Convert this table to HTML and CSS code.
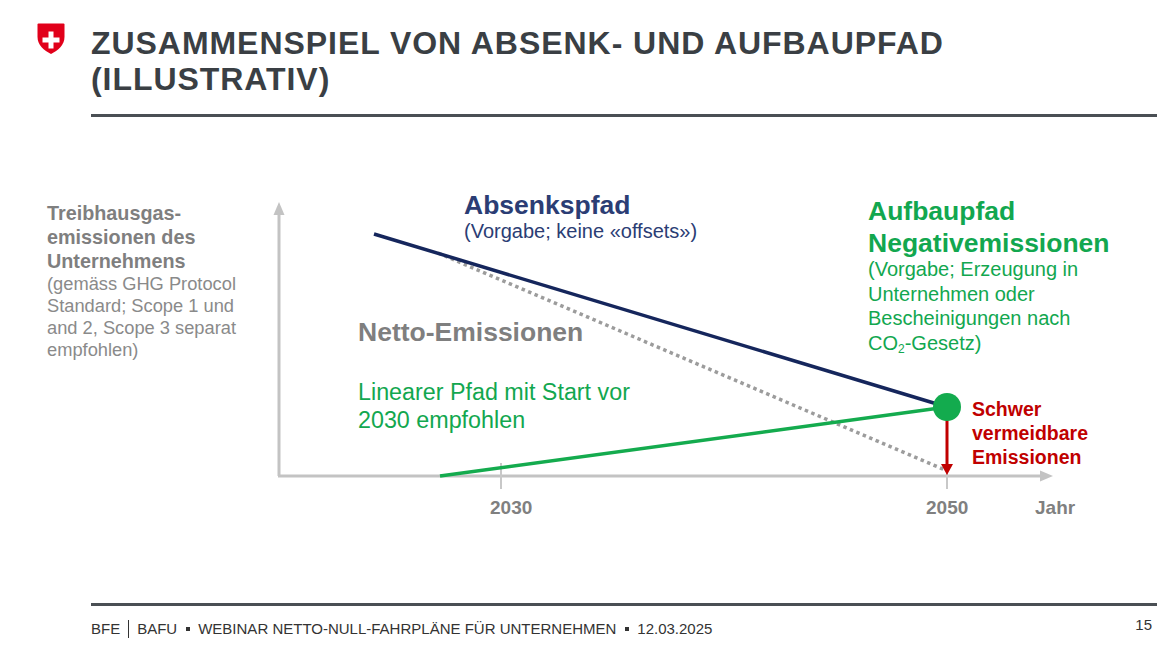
FILE: index.html
```html
<!DOCTYPE html>
<html lang="de">
<head>
<meta charset="utf-8">
<title>Zusammenspiel von Absenk- und Aufbaupfad</title>
<link rel="stylesheet" href="styles.css">
</head>
<body>
<div class="slide">
  <header class="header">
    <svg class="logo" viewBox="0 0 28 31" width="28" height="31" aria-label="Schweizerische Eidgenossenschaft">
      <path d="M1.5 0.5 H26.5 Q27.5 0.5 27.5 1.5 V14 C27.5 22 21 27.5 14 31 C7 27.5 0.5 22 0.5 14 V1.5 Q0.5 0.5 1.5 0.5 Z" fill="#e1001a"/>
      <rect x="11.5" y="8.5" width="5" height="17" fill="#fff"/>
      <rect x="5.5" y="14.5" width="17" height="5" fill="#fff"/>
    </svg>
    <h1 class="title">ZUSAMMENSPIEL VON ABSENK- UND AUFBAUPFAD<br>(ILLUSTRATIV)</h1>
  </header>
  <div class="rule rule-top"></div>

  <main class="chart">
    <svg class="chart-canvas" viewBox="0 117 1170 486" width="1170" height="486">
      <!-- axes -->
      <line x1="279" y1="476" x2="279" y2="214" stroke="#c3c3c3" stroke-width="3"/>
      <polygon points="279,202 273.5,215 284.5,215" fill="#c3c3c3"/>
      <line x1="278" y1="476" x2="1040" y2="476" stroke="#c3c3c3" stroke-width="3"/>
      <polygon points="1053,476 1040,470.5 1040,481.5" fill="#c3c3c3"/>
      <!-- ticks -->
      <line x1="501" y1="463" x2="501" y2="489" stroke="#c8c8c8" stroke-width="2"/>
      <line x1="947" y1="463" x2="947" y2="489" stroke="#c8c8c8" stroke-width="2"/>
      <!-- net emissions dotted -->
      <line x1="438" y1="253" x2="945" y2="470" stroke="#9c9c9c" stroke-width="3.5" stroke-dasharray="3.5 3.5"/>
      <!-- absenkpfad -->
      <line x1="374" y1="234" x2="947" y2="407" stroke="#15265c" stroke-width="3.5"/>
      <!-- aufbaupfad -->
      <line x1="440" y1="476" x2="947" y2="407" stroke="#14ab4e" stroke-width="3.5"/>
      <!-- red arrow -->
      <line x1="947" y1="420" x2="947" y2="466" stroke="#c00000" stroke-width="3"/>
      <polygon points="947,475 941,464 953,464" fill="#c00000"/>
      <circle cx="947" cy="407" r="14" fill="#13ab4e"/>
    </svg>

    <div class="label label-y">
      <div class="y-bold">Treibhausgas-<br>emissionen des<br>Unternehmens</div>
      <div class="y-note">(gemäss GHG Protocol<br>Standard; Scope 1 und<br>and 2, Scope 3 separat<br>empfohlen)</div>
    </div>

    <div class="label label-absenk">
      <div class="big navy">Absenkspfad</div>
      <div class="note navy">(Vorgabe; keine «offsets»)</div>
    </div>

    <div class="label label-aufbau">
      <div class="big green">Aufbaupfad<br>Negativemissionen</div>
      <div class="note green note-aufbau">(Vorgabe; Erzeugung in<br>Unternehmen oder<br>Bescheinigungen nach<br>CO<sub>2</sub>-Gesetz)</div>
    </div>

    <div class="label label-netto big grey">Netto-Emissionen</div>

    <div class="label label-linear green">Linearer Pfad mit Start vor<br>2030 empfohlen</div>

    <div class="label label-schwer">Schwer<br>vermeidbare<br>Emissionen</div>

    <div class="label axis-label label-2030">2030</div>
    <div class="label axis-label label-2050">2050</div>
    <div class="label axis-label label-jahr">Jahr</div>
  </main>

  <div class="rule rule-bottom"></div>
  <footer class="footer">
    <div class="footer-text">BFE<span class="sep"></span>BAFU<span class="dot"></span>WEBINAR NETTO-NULL-FAHRPLÄNE FÜR UNTERNEHMEN<span class="dot"></span>12.03.2025</div>
    <div class="page-no">15</div>
  </footer>
</div>
</body>
</html>
```

FILE: styles.css
```css
html, body {
  margin: 0;
  padding: 0;
  background: #ffffff;
}

body {
  font-family: "Liberation Sans", Arial, sans-serif;
  width: 1170px;
  height: 647px;
  overflow: hidden;
}

.slide {
  width: 1170px;
  height: 647px;
  display: flex;
  flex-direction: column;
}

.header {
  display: flex;
  align-items: flex-start;
  padding-top: 23px;
  padding-left: 37px;
}

.logo {
  display: block;
  flex: none;
  margin-right: 26px;
}

.title {
  margin: 2px 0 0 0;
  font-size: 32px;
  line-height: 36px;
  font-weight: bold;
  letter-spacing: 0.95px;
  color: #3a3f44;
}

.rule {
  height: 3px;
  background: #4a4f54;
  margin-left: 91px;
  margin-right: 13px;
  flex: none;
}

.rule-top {
  margin-top: 17px;
}

.chart {
  position: relative;
  height: 486px;
  flex: none;
}

.chart-canvas {
  position: absolute;
  left: 0;
  top: 0;
  display: block;
}

.label {
  position: absolute;
  white-space: nowrap;
}

.big {
  font-size: 26.5px;
  line-height: 32px;
  font-weight: bold;
}

.note {
  font-size: 20px;
  line-height: 24px;
}

.navy { color: #2b3d74; }
.green { color: #12a74f; }
.grey { color: #7f7f7f; }

.label-y {
  left: 47px;
  top: 84px;
}

.y-bold {
  font-size: 19.8px;
  line-height: 24px;
  font-weight: bold;
  color: #7f7f7f;
}

.y-note {
  font-size: 18.3px;
  line-height: 22px;
  color: #8a8a8a;
}

.label-absenk {
  left: 464px;
  top: 72px;
}

.label-absenk .note {
  margin-top: -2px;
}

.label-aufbau {
  left: 868px;
  top: 78px;
}

.note-aufbau {
  line-height: 24.5px;
  margin-top: -2px;
}

.note-aufbau sub {
  font-size: 12px;
  line-height: 0;
  vertical-align: -3px;
}

.label-netto {
  left: 358px;
  top: 199px;
}

.label-linear {
  left: 358px;
  top: 261px;
  font-size: 23.3px;
  line-height: 28px;
}

.label-schwer {
  left: 972px;
  top: 280px;
  font-size: 19.5px;
  line-height: 24px;
  font-weight: bold;
  color: #c00000;
}

.axis-label {
  top: 380px;
  font-size: 19px;
  line-height: 22px;
  font-weight: bold;
  color: #808080;
}

.label-2030 { left: 490px; }
.label-2050 { left: 926px; }
.label-jahr { left: 1035px; }

.footer {
  display: flex;
  justify-content: space-between;
  align-items: flex-start;
  padding-left: 91px;
  padding-right: 18px;
  margin-top: 10px;
  color: #333333;
}

.footer-text {
  margin-top: 4px;
  font-size: 15px;
  line-height: 18px;
  display: flex;
  align-items: center;
}

.sep {
  display: inline-block;
  width: 0;
  height: 18px;
  border-left: 1px solid #333333;
  margin: 0 8px;
}

.dot {
  display: inline-block;
  width: 4px;
  height: 4px;
  background: #333333;
  margin: 0 8.5px;
}

.page-no {
  font-size: 15px;
  line-height: 18px;
}
```
